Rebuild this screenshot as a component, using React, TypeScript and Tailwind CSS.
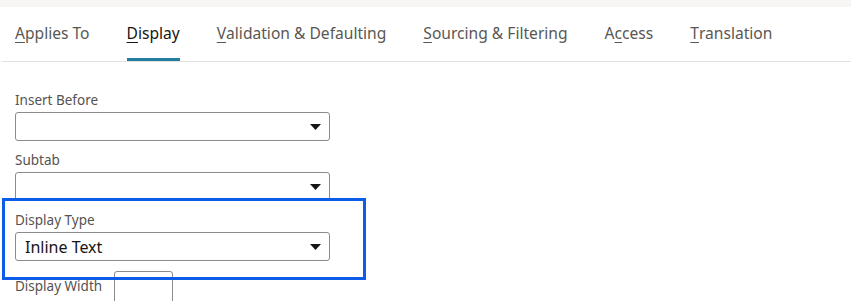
import { Fragment } from "react";

const TABS = [
  { label: "Applies To", key: 0 },
  { label: "Display", key: 0, active: true },
  { label: "Validation & Defaulting", key: 0 },
  { label: "Sourcing & Filtering", key: 0 },
  { label: "Access", key: 1 },
  { label: "Translation", key: 0 },
];

function TabLabel({ label, keyIdx }: { label: string; keyIdx: number }) {
  return (
    <Fragment>
      {label.slice(0, keyIdx)}
      <span className="underline underline-offset-[3px] decoration-1">{label[keyIdx]}</span>
      {label.slice(keyIdx + 1)}
    </Fragment>
  );
}

function Caret() {
  return (
    <svg width="11" height="6" viewBox="0 0 11 6" className="shrink-0">
      <path d="M0 0 H11 L5.5 6 Z" fill="#161513" />
    </svg>
  );
}

function SelectBox({ value }: { value?: string }) {
  return (
    <div className="flex h-[29px] w-[315px] items-center justify-between rounded-[3px] border border-[#8d8b88] bg-white pl-[9px] pr-[8px]">
      <span className="text-[16px] text-[#161513]">{value ?? ""}</span>
      <Caret />
    </div>
  );
}

function Field({ label, value }: { label: string; value?: string }) {
  return (
    <div className="mb-[7px]">
      <div className="flex h-[24px] items-center text-[13.5px] text-[#555350]">{label}</div>
      <SelectBox value={value} />
    </div>
  );
}

export default function App() {
  return (
    <div className="relative h-[301px] w-[851px] overflow-hidden bg-white font-['Noto_Sans',sans-serif]">
      <div className="h-[7px] bg-[#f7f6f4]" />

      <div className="ml-[2px] flex h-[55px] items-end gap-[37px] border-b border-[#e2e1df] pl-[13px]">
        {TABS.map((t) => (
          <div
            key={t.label}
            className={
              "flex h-full items-center border-b-[3px] pt-[2px] text-[15.6px] " +
              (t.active ? "border-[#227e9e] text-[#161513]" : "border-transparent text-[#595754]")
            }
          >
            <TabLabel label={t.label} keyIdx={t.key} />
          </div>
        ))}
      </div>

      <div className="pl-[15px] pt-[26px]">
        <Field label="Insert Before" />
        <Field label="Subtab" />
        <Field label="Display Type" value="Inline Text" />
        <div className="mt-[10px] flex items-start gap-[12px]">
          <span className="pt-[5px] text-[13.5px] text-[#555350]">Display Width</span>
          <div className="h-[36px] w-[59px] rounded-[3px] border border-[#8d8b88]" />
        </div>
      </div>

      <div className="pointer-events-none absolute left-[2px] top-[198px] h-[82px] w-[364px] border-[3px] border-[#0d5ce8]" />
    </div>
  );
}
